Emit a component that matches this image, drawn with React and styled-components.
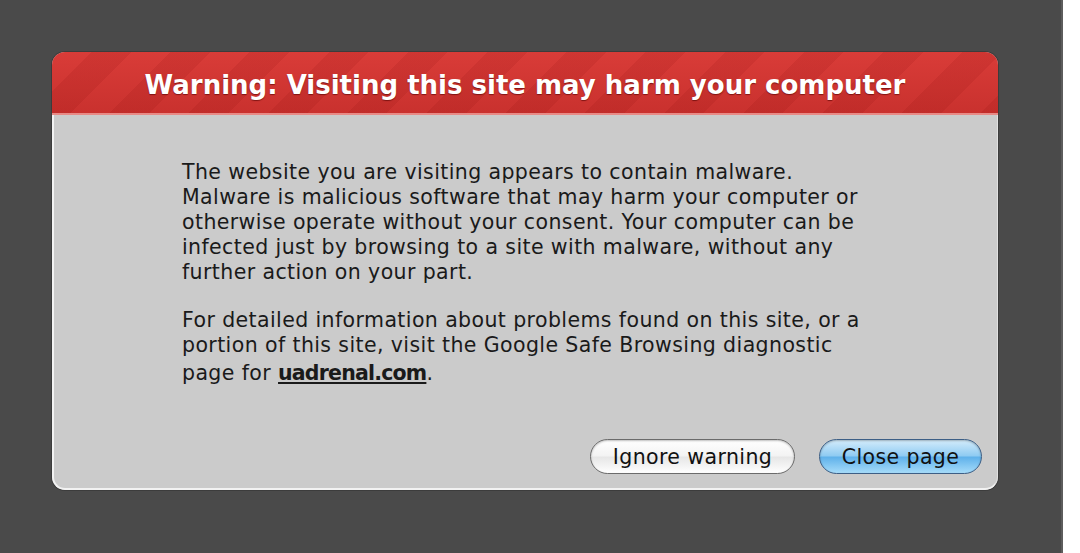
import React from 'react';
import styled, { createGlobalStyle } from 'styled-components';

const GlobalStyle = createGlobalStyle`
  html, body {
    margin: 0;
    padding: 0;
    background: #ffffff;
  }
  body {
    font-family: "DejaVu Sans", "Liberation Sans", sans-serif;
  }
`;

const Page = styled.div`
  display: flex;
  width: 1080px;
  height: 553px;
  overflow: hidden;
`;

const Backdrop = styled.div`
  width: 1063px;
  height: 100%;
  background: #4a4a4a;
  border-right: 2px solid #5c5c5c;
  padding: 52px 0 0 52px;
  box-sizing: border-box;
`;

const Dialog = styled.section`
  width: 946px;
  height: 438px;
  display: flex;
  flex-direction: column;
  border-radius: 13px;
  overflow: hidden;
  background: #cbcbcb;
  box-shadow: 0 0 0 1px #3c3c3c;
`;

const Header = styled.header`
  height: 61px;
  flex-shrink: 0;
  display: flex;
  align-items: center;
  justify-content: center;
  background:
    repeating-linear-gradient(
      135deg,
      rgba(0, 0, 0, 0) 0px,
      rgba(0, 0, 0, 0) 28px,
      rgba(120, 0, 0, 0.1) 28px,
      rgba(120, 0, 0, 0.1) 56px
    ),
    linear-gradient(#d93c38, #c9312e);
  border-bottom: 2px solid #e88a86;
`;

const Title = styled.h1`
  margin: 0;
  color: #ffffff;
  font-size: 26px;
  font-weight: bold;
  text-shadow: 0 1px 1px rgba(80, 0, 0, 0.6);
  padding-top: 4px;
`;

const Body = styled.div`
  flex: 1;
  display: flex;
  flex-direction: column;
  padding: 45px 15px 14px 128px;
  border-left: 2px solid #f2f2f2;
  border-bottom: 2px solid #f2f2f2;
  border-right: 1px solid #e0e0e0;
  border-radius: 0 0 13px 13px;
`;

const Paragraph = styled.p`
  margin: 0 0 23px 0;
  color: #1a1a1a;
  font-size: 20.5px;
  letter-spacing: 0.4px;
  line-height: 25px;
  white-space: nowrap;

  &:last-of-type {
    margin-bottom: 0;
  }
`;

const SiteLink = styled.a`
  color: #1a1a1a;
  font-weight: bold;
  letter-spacing: -0.8px;
  text-decoration: underline;
  line-height: 30px;
`;

const Actions = styled.div`
  margin-top: auto;
  display: flex;
  justify-content: flex-end;
  gap: 24px;
`;

const Button = styled.button`
  width: ${(p) => (p.$primary ? '163px' : '205px')};
  height: 35px;
  padding: 0;
  border-radius: 18px;
  font-family: "DejaVu Sans", "Liberation Sans", sans-serif;
  font-size: 20.5px;
  letter-spacing: 0.4px;
  color: #111;
  cursor: pointer;
  border: 1px solid ${(p) => (p.$primary ? '#3d5f86' : '#6b6b6b')};
  background: ${(p) =>
    p.$primary
      ? 'linear-gradient(#d4ecfb 0%, #8fcbf2 48%, #5fb1ea 52%, #a6dcfa 100%)'
      : 'linear-gradient(#ffffff 0%, #f3f3f3 48%, #e6e6e6 52%, #ffffff 100%)'};
  box-shadow: inset 0 1px 2px rgba(0, 0, 0, 0.25);
`;

export default function App() {
  return (
    <>
      <GlobalStyle />
      <Page>
        <Backdrop>
          <Dialog>
            <Header>
              <Title>Warning: Visiting this site may harm your computer</Title>
            </Header>
            <Body>
              <Paragraph>
                The website you are visiting appears to contain malware.
                <br />
                Malware is malicious software that may harm your computer or
                <br />
                otherwise operate without your consent. Your computer can be
                <br />
                infected just by browsing to a site with malware, without any
                <br />
                further action on your part.
              </Paragraph>
              <Paragraph>
                For detailed information about problems found on this site, or a
                <br />
                portion of this site, visit the Google Safe Browsing diagnostic
                <br />
                page for <SiteLink href="#">uadrenal.com</SiteLink>.
              </Paragraph>
              <Actions>
                <Button>Ignore warning</Button>
                <Button $primary>Close page</Button>
              </Actions>
            </Body>
          </Dialog>
        </Backdrop>
      </Page>
    </>
  );
}
